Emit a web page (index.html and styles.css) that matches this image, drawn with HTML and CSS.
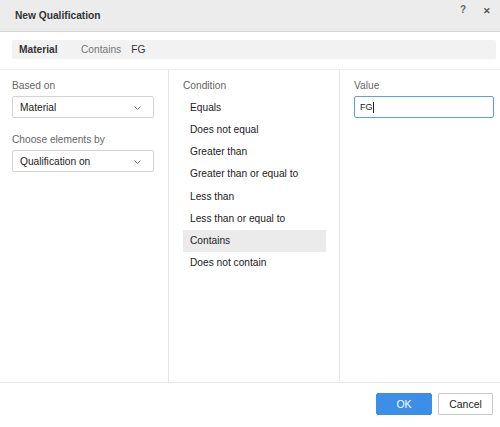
FILE: index.html
```html
<!DOCTYPE html>
<html>
<head>
<meta charset="utf-8">
<link rel="stylesheet" href="styles.css">
</head>
<body>
<div class="dialog">
  <div class="header">
    <div class="title">New Qualification</div>
    <div class="tools">
      <span class="help">?</span>
      <span class="close">&#x2715;</span>
    </div>
  </div>
  <div class="summary">
    <span class="sum-field">Material</span>
    <span class="sum-op">Contains</span>
    <span class="sum-val">FG</span>
  </div>
  <div class="content">
    <div class="col col-left">
      <div class="label">Based on</div>
      <div class="select">
        <span>Material</span>
        <svg class="chev" width="7" height="4" viewBox="0 0 7 4"><path d="M0.5 0.5 L3.5 3.5 L6.5 0.5" fill="none" stroke="#666" stroke-width="0.9"/></svg>
      </div>
      <div class="label label-2">Choose elements by</div>
      <div class="select">
        <span>Qualification on</span>
        <svg class="chev" width="7" height="4" viewBox="0 0 7 4"><path d="M0.5 0.5 L3.5 3.5 L6.5 0.5" fill="none" stroke="#666" stroke-width="0.9"/></svg>
      </div>
    </div>
    <div class="col col-mid">
      <div class="label">Condition</div>
      <ul class="list">
        <li>Equals</li>
        <li>Does not equal</li>
        <li>Greater than</li>
        <li>Greater than or equal to</li>
        <li>Less than</li>
        <li>Less than or equal to</li>
        <li class="selected">Contains</li>
        <li>Does not contain</li>
      </ul>
    </div>
    <div class="col col-right">
      <div class="label">Value</div>
      <div class="input"><span>FG</span><span class="caret"></span></div>
    </div>
  </div>
  <div class="footer">
    <button class="btn btn-ok">OK</button>
    <button class="btn btn-cancel">Cancel</button>
  </div>
</div>
</body>
</html>
```
FILE: styles.css
```css
* { box-sizing: border-box; }
html, body { margin: 0; padding: 0; background: #fff; }
body {
  font-family: "Liberation Sans", Arial, sans-serif;
  font-size: 10.2px;
  color: #222;
}
.dialog {
  width: 500px;
  height: 427px;
  display: flex;
  flex-direction: column;
  background: #fff;
}
.header {
  height: 32px;
  flex: none;
  background: #ececec;
  border-bottom: 1px solid #d6d6d6;
  display: flex;
  align-items: center;
  justify-content: space-between;
  padding: 0 9px 0 15px;
}
.title {
  font-weight: bold;
  color: #333;
}
.tools {
  display: flex;
  gap: 17px;
  align-self: flex-start;
  margin-top: 4px;
  color: #555;
}
.help { font-size: 10px; font-weight: bold; color: #666; }
.close { font-size: 9px; font-weight: bold; color: #555; margin-top: 2px; }
.summary {
  margin: 8px 4px 0 12px;
  height: 19px;
  background: #f2f2f2;
  border-radius: 2px;
  display: flex;
  align-items: center;
  padding-left: 7px;
  flex: none;
}
.sum-field { font-weight: bold; color: #333; width: 62px; }
.sum-op { color: #777; margin-right: 10px; }
.sum-val { color: #333; }
.content {
  margin-top: 10px;
  flex: 1;
  border-top: 1px solid #efefef;
  border-bottom: 1px solid #e8e8e8;
  display: flex;
}
.col { padding-top: 10px; }
.col-left {
  width: 169px;
  border-right: 1px solid #e6e6e6;
  padding-left: 12px;
  padding-right: 14px;
}
.col-mid {
  width: 171px;
  border-right: 1px solid #e6e6e6;
  padding-left: 14px;
  padding-right: 13px;
}
.col-right {
  flex: 1;
  padding-left: 14px;
  padding-right: 6px;
}
.label {
  color: #666;
  line-height: 12px;
  margin-bottom: 4px;
}
.col-mid .label { margin-bottom: 5px; }
.label-2 { margin-top: 16px; }
.select {
  height: 22px;
  border: 1px solid #d4d4d4;
  border-radius: 2px;
  display: flex;
  align-items: center;
  justify-content: space-between;
  padding: 0 12px 0 7px;
  color: #222;
  background: #fff;
}
.chev { margin-top: 1px; }
.list {
  list-style: none;
  margin: 0;
  padding: 0;
}
.list li {
  height: 22.15px;
  line-height: 22.15px;
  padding-left: 7px;
  color: #222;
}
.list li.selected { background: #ebebeb; }
.input {
  height: 22px;
  border: 1px solid #5b9ee9;
  border-radius: 2px;
  display: flex;
  align-items: center;
  padding-left: 5px;
  font-size: 9px;
  color: #222;
}
.caret {
  display: inline-block;
  width: 1px;
  height: 11px;
  background: #222;
}
.footer {
  height: 44px;
  flex: none;
  display: flex;
  justify-content: flex-end;
  align-items: flex-start;
  padding: 10px 7px 0 0;
  gap: 6px;
}
.btn {
  height: 22px;
  font-family: "Liberation Sans", Arial, sans-serif;
  font-size: 10.5px;
  border-radius: 2px;
  padding: 0;
  cursor: pointer;
}
.btn-ok {
  width: 56px;
  background: #3c8ee9;
  border: 1px solid #3c8ee9;
  color: #fff;
}
.btn-cancel {
  width: 55px;
  background: #fff;
  border: 1px solid #c8c8c8;
  color: #222;
}
```
